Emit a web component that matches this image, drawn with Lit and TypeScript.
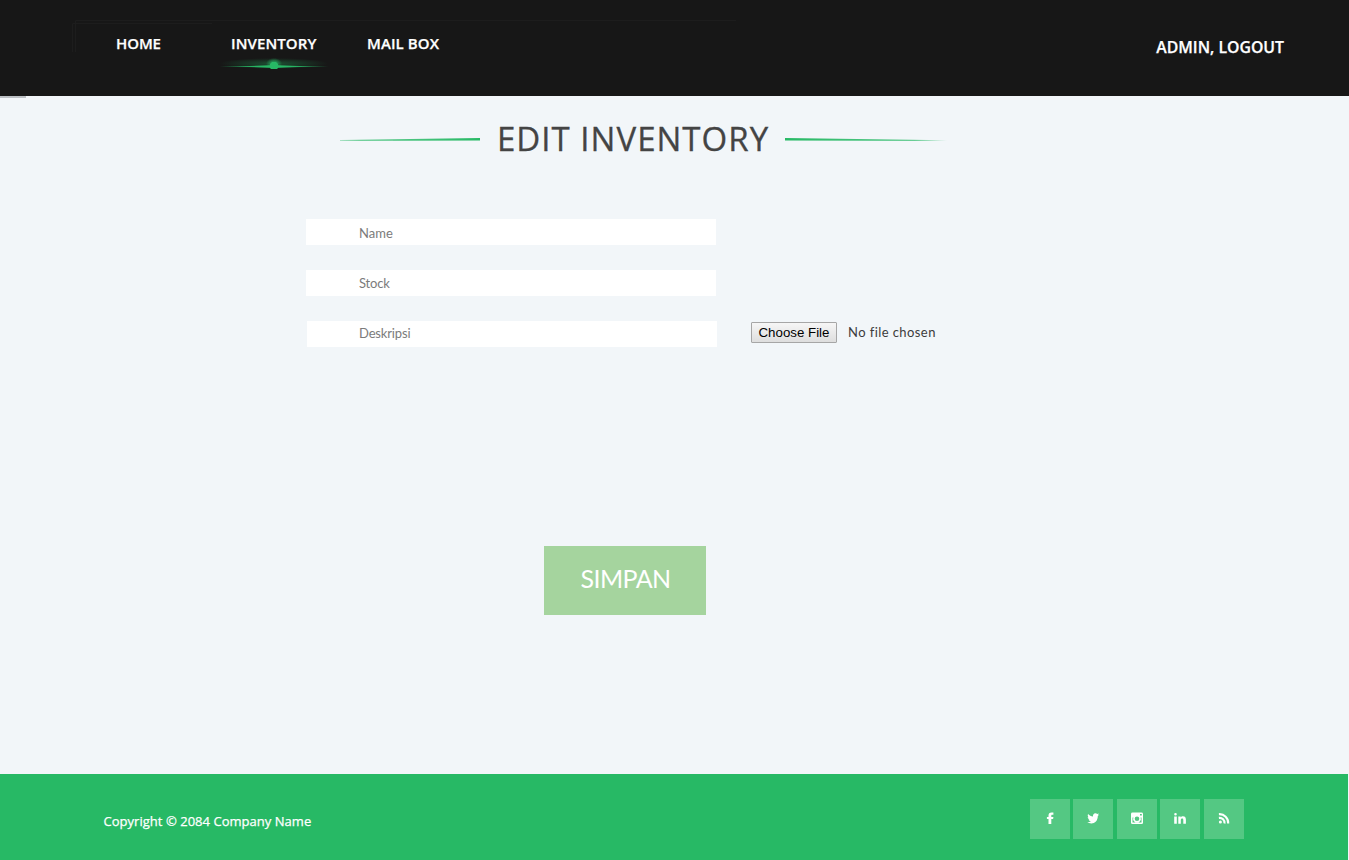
import { LitElement, html, css, svg } from "lit";
import { customElement } from "lit/decorators.js";

const icons = [
  { name: "Facebook", art: svg`<path d="M4.500 12V7H2.900V4.900H4.500V3.500C4.500 1.600 5.500.6 7.500.6H9.400V2.700H8.200C7.500 2.700 7.300 3 7.300 3.700V4.900H9.400L9.100 7H7.300V12Z"/>` },
  { name: "Twitter", art: svg`<path d="M12 2.800 10.800 3.900C10.800 8.500 8 11.400 4.300 11.400 2.700 11.400 1.300 11 .2 10.300 1.700 10.400 3 10 3.900 9.200 2.800 9.100 1.900 8.400 1.600 7.500H2.700C1.500 7.200.7 6.200.7 5L1.800 5.300C.7 4.400.4 3.100 1.100 1.900 2.400 3.500 4 4.300 6 4.400 5.700 2.700 6.800 1.300 8.400 1.300 9.200 1.300 9.800 1.600 10.200 2.100L11.800 1.500 11 2.900Z"/>` },
  { name: "Instagram", art: svg`<path fill-rule="evenodd" d="M1.500.6H10.500Q12 .6 12 2V10.700Q12 12 10.500 12H1.500Q0 12 0 10.700V2Q0 .6 1.500.6ZM9 1.900V3.600H10.800V1.900ZM1.500 5.400V10.500H10.500V5.400H9.600A3.900 3.900 0 1 1 2.400 5.400ZM6 4.400A2.300 2.300 0 1 0 6 9 2.300 2.300 0 1 0 6 4.400Z"/>` },
  { name: "LinkedIn", art: svg`<path d="M.2 4.500H2.800V11.700H.2ZM1.500.9A1.300 1.300 0 1 1 1.500 3.500 1.300 1.300 0 1 1 1.500.9ZM4.300 4.500H6.700V5.500C7.100 4.700 7.900 4.300 9 4.300 11 4.300 11.900 5.500 11.900 7.600V11.700H9.300V8C9.300 6.900 9 6.400 8.200 6.400 7.300 6.400 6.800 7 6.800 8V11.700H4.300Z"/>` },
  { name: "RSS", art: svg`<circle cx="2.400" cy="10" r="1.500"/><path fill="none" stroke="#fff" stroke-width="2.100" d="M.9 5.900A5 5 0 0 1 6.500 11.500M.9 2.200A8.700 8.700 0 0 1 10.200 11.500"/>` },
];

@customElement("app-root")
export class AppRoot extends LitElement {
  static styles = css`
    :host {
      display: flex;
      flex-direction: column;
      height: 860px;
      overflow: hidden;
      background: #f2f6f9;
      font-family: "Open Sans", sans-serif;
    }
    * { box-sizing: border-box; }
    svg { display: block; }
    header {
      position: relative;
      display: flex;
      height: 96px;
      flex: none;
      background: #171717;
      color: #fff;
      font-weight: 600;
      font-size: 15px;
      line-height: 20px;
      white-space: nowrap;
      -webkit-text-stroke: 0.25px #fff;
    }
    .frame { position: absolute; left: 72px; top: 20px; }
    nav { display: flex; padding-top: 33px; flex: 1; }
    nav a { display: block; letter-spacing: 0.1px; }
    nav .home { margin-left: 116px; width: 115px; letter-spacing: -0.1px; }
    .inventory { width: 136px; }
    .marker { margin: 4px 0 0 -16px; }
    .account { padding: 37px 65px 0 0; font-size: 15.8px; }
    .loading { width: 26px; height: 2px; background: #bcc0c4; }
    main { flex: 1; }
    .heading { display: flex; height: 122px; margin-top: -1px; padding: 22px 0 0 340px; }
    .heading svg { margin-top: 18px; }
    h1 {
      width: 305px;
      margin: 0;
      padding-left: 17px;
      font-size: 33px;
      line-height: 40px;
      font-weight: 400;
      letter-spacing: 1.02px;
      color: #444;
      -webkit-text-stroke: 0.3px #444;
      white-space: nowrap;
    }
    .form { display: grid; grid-template-columns: 411px 1fr; column-gap: 34px; row-gap: 25px; margin-left: 306px; }
    input {
      grid-column: 1;
      width: 410px;
      height: 26px;
      border: 0;
      border-radius: 0;
      padding: 2px 0 0 53px;
      background: #fff;
      font: 13px/20px Lato, sans-serif;
      outline: none;
    }
    input::placeholder { color: #7b7b7b; opacity: 1; }
    .stock { padding: 0 0 1px 53px; letter-spacing: -0.15px; }
    .description { margin-left: 1px; padding: 0 0 2px 52px; letter-spacing: -0.15px; }
    .file { grid-column: 2; grid-row: 3; display: flex; padding-top: 1px; }
    .choose {
      width: 86px;
      height: 21px;
      padding: 0;
      border: 1px solid #a6a6a6;
      border-radius: 1px;
      background: linear-gradient(#f6f6f6, #dedede);
      color: #000;
      font: 13.3px/18px "Liberation Sans", sans-serif;
    }
    .status { margin-left: 11px; font: 13px/20px Lato, sans-serif; letter-spacing: 0.42px; color: #3c3c3c; }
    .save {
      display: block;
      width: 162px;
      height: 69px;
      margin: 199px 0 0 544px;
      padding: 0 0 5px 1px;
      border: 0;
      background: #a5d49e;
      color: #fff;
      font: 25px/30px Lato, sans-serif;
      letter-spacing: -0.6px;
    }
    footer {
      display: flex;
      flex: none;
      justify-content: space-between;
      width: 1348px;
      height: 86px;
      padding: 25px 104.1px 0 103.5px;
      background: #27b965;
      color: #fff;
    }
    .copyright {
      padding-top: 12px;
      font-size: 13px;
      line-height: 20px;
      letter-spacing: 0.03px;
      -webkit-text-stroke: 0.25px #fff;
    }
    .social { display: flex; gap: 3.5px; }
    .social a { display: grid; place-items: center; width: 40px; height: 40px; padding-bottom: 2px; background: #54c883; }
  `;

  render() {
    return html`
      <header>
        <svg class="frame" width="666" height="32" fill="none" stroke="#1d1d1d">
          <path d="M3.500 32V.5H664M.5 32V3.500H140" />
        </svg>
        <nav>
          <a class="home">HOME</a>
          <a class="inventory">INVENTORY
            <svg class="marker" width="118" height="14" viewBox="0 0 118 14">
              <defs>
                <linearGradient id="beam"><stop stop-color="#27b965" stop-opacity="0"/><stop offset=".3" stop-color="#27b965" stop-opacity=".85"/><stop offset=".5" stop-color="#27b965"/><stop offset=".7" stop-color="#27b965" stop-opacity=".85"/><stop offset="1" stop-color="#27b965" stop-opacity="0"/></linearGradient>
                <radialGradient id="halo"><stop stop-color="#27b965" stop-opacity=".35"/><stop offset="1" stop-color="#27b965" stop-opacity="0"/></radialGradient>
                <radialGradient id="spot"><stop offset=".4" stop-color="#27b965" stop-opacity=".6"/><stop offset="1" stop-color="#27b965" stop-opacity="0"/></radialGradient>
              </defs>
              <path fill="url(#halo)" d="M5 1H113V12H5Z"/>
              <path fill="url(#beam)" d="M5 9H113V10H5Z"/>
              <path fill="url(#beam)" d="M20 9.500 59 8 98 9.500 59 11Z"/>
              <path fill="url(#spot)" d="M51 1H67V12H51Z"/>
              <path fill="#27b965" d="M57 5H61L63 7V11L62 12H56L55 11V7Z"/>
            </svg>
          </a>
          <a>MAIL BOX</a>
        </nav>
        <div class="account">ADMIN, LOGOUT</div>
      </header>
      <div class="loading"></div>
      <main>
        <div class="heading">
          <svg width="140" height="6"><defs><linearGradient id="left"><stop stop-color="#27b965" stop-opacity=".35"/><stop offset=".15" stop-color="#27b965" stop-opacity=".7"/><stop offset="1" stop-color="#27b965"/></linearGradient></defs><path fill="url(#left)" d="M0 3.100 140 1V3.500L0 4Z"/></svg>
          <h1>EDIT INVENTORY</h1>
          <svg width="162" height="6"><defs><linearGradient id="right"><stop stop-color="#27b965"/><stop offset=".8" stop-color="#27b965" stop-opacity=".75"/><stop offset="1" stop-color="#27b965" stop-opacity="0"/></linearGradient></defs><path fill="url(#right)" d="M0 1 162 3.200V4L0 3.500Z"/></svg>
        </div>
        <div class="form">
          <input placeholder="Name" />
          <input class="stock" placeholder="Stock" />
          <input class="description" placeholder="Deskripsi" />
          <div class="file">
            <button class="choose">Choose File</button>
            <span class="status">No file chosen</span>
          </div>
        </div>
        <button class="save">SIMPAN</button>
      </main>
      <footer>
        <div class="copyright">Copyright © 2084 Company Name</div>
        <div class="social">
          ${icons.map((icon) => html`<a aria-label=${icon.name}><svg width="12" height="13" viewBox="0 0 12 13" fill="#fff">${icon.art}</svg></a>`)}
        </div>
      </footer>
    `;
  }
}
